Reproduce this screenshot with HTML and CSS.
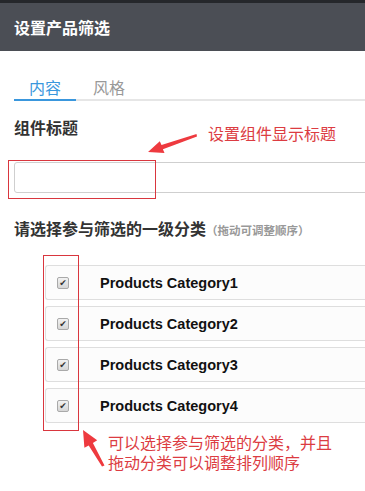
FILE: index.html
```html
<!DOCTYPE html>
<html lang="zh">
<head>
<meta charset="utf-8">
<link rel="stylesheet" href="styles.css">
</head>
<body>
<div class="page">
  <div class="header">设置产品筛选</div>
  <div class="content">
    <div class="tabs">
      <div class="tab active">内容</div>
      <div class="tab">风格</div>
    </div>
    <div class="label label-title">组件标题</div>
    <div class="input"></div>
    <div class="label label-cats">请选择参与筛选的一级分类<span class="hint">（拖动可调整顺序）</span></div>
    <div class="list">
      <div class="row"><span class="cb">✔</span><span class="name">Products Category1</span></div>
      <div class="row"><span class="cb">✔</span><span class="name">Products Category2</span></div>
      <div class="row"><span class="cb">✔</span><span class="name">Products Category3</span></div>
      <div class="row"><span class="cb">✔</span><span class="name">Products Category4</span></div>
    </div>
  </div>

  <div class="mark mark-input"></div>
  <div class="mark mark-checks"></div>
  <svg class="arrows" width="365" height="491" viewBox="0 0 365 491">
    <polygon points="148,152 164.5,153 162.9,149.2 197,136.5 196.5,134 161.5,145 159.8,141.3" fill="#ee3a3f"/>
    <polygon points="83,430 97.2,440.3 92.9,443 104.5,465.5 102,466.5 88.7,445.4 84.4,447.8" fill="#ee3a3f"/>
  </svg>
  <div class="note note-1">设置组件显示标题</div>
  <div class="note note-2"><div>可以选择参与筛选的分类，并且</div><div>拖动分类可以调整排列顺序</div></div>
</div>
</body>
</html>
```
FILE: styles.css
```css
html, body {
  margin: 0;
  padding: 0;
  background: #fff;
}
.page {
  position: relative;
  width: 365px;
  height: 491px;
  overflow: hidden;
  font-family: "Noto Sans CJK SC", "Liberation Sans", sans-serif;
  color: #333;
}
.header {
  box-sizing: border-box;
  height: 51px;
  border-top: 3px solid #25272b;
  background: #4b4e55;
  color: #fff;
  font-size: 16px;
  font-weight: bold;
  line-height: 48px;
  padding-left: 14px;
}
.content {
  padding-left: 14px;
}
.tabs {
  display: flex;
  margin-top: 24px;
  border-bottom: 2px solid #e6e6e6;
}
.tab {
  width: 62px;
  text-align: center;
  font-size: 16px;
  line-height: 24px;
  color: #999;
  margin-bottom: -2px;
  border-bottom: 2px solid transparent;
}
.tab + .tab {
  margin-left: 2px;
}
.tab.active {
  color: #3a97dd;
  border-bottom-color: #3a97dd;
}
.label {
  font-size: 16px;
  font-weight: bold;
  line-height: 24px;
  color: #333;
}
.label-title {
  margin-top: 14px;
}
.input {
  box-sizing: border-box;
  margin-top: 23px;
  width: 380px;
  height: 31px;
  border: 1px solid #cfcfcf;
  border-radius: 3px;
}
.label-cats {
  margin-top: 23px;
}
.hint {
  font-size: 11.5px;
  color: #999;
  font-weight: bold;
}
.list {
  margin-top: 23px;
  margin-left: 31px;
  display: flex;
  flex-direction: column;
  gap: 6px;
}
.row {
  box-sizing: border-box;
  height: 35px;
  width: 340px;
  border: 1px solid #dedede;
  border-right: none;
  border-radius: 3px 0 0 3px;
  background: #fcfcfc;
  display: flex;
  align-items: center;
  padding-left: 11px;
}
.cb {
  box-sizing: border-box;
  width: 12px;
  height: 12px;
  border: 1px solid #a9a9a9;
  border-radius: 2px;
  background: linear-gradient(#f2f2f2, #d6d6d6);
  font-size: 9px;
  line-height: 10px;
  text-align: center;
  color: #333;
  font-family: "DejaVu Sans", sans-serif;
}
.name {
  margin-left: 31px;
  font-family: "Liberation Sans", sans-serif;
  font-size: 14.5px;
  font-weight: bold;
  color: #111;
}
.mark {
  position: absolute;
  border: 1.5px solid #d9363e;
  box-sizing: border-box;
}
.mark-input {
  left: 8px;
  top: 160px;
  width: 148px;
  height: 39px;
}
.mark-checks {
  left: 43px;
  top: 255px;
  width: 36px;
  height: 176px;
}
.arrows {
  position: absolute;
  left: 0;
  top: 0;
}
.note {
  position: absolute;
  color: #dc3c42;
  font-size: 16px;
  line-height: 20px;
  white-space: nowrap;
}
.note-1 {
  left: 208px;
  top: 123px;
}
.note-2 {
  left: 108px;
  top: 432px;
}
```
